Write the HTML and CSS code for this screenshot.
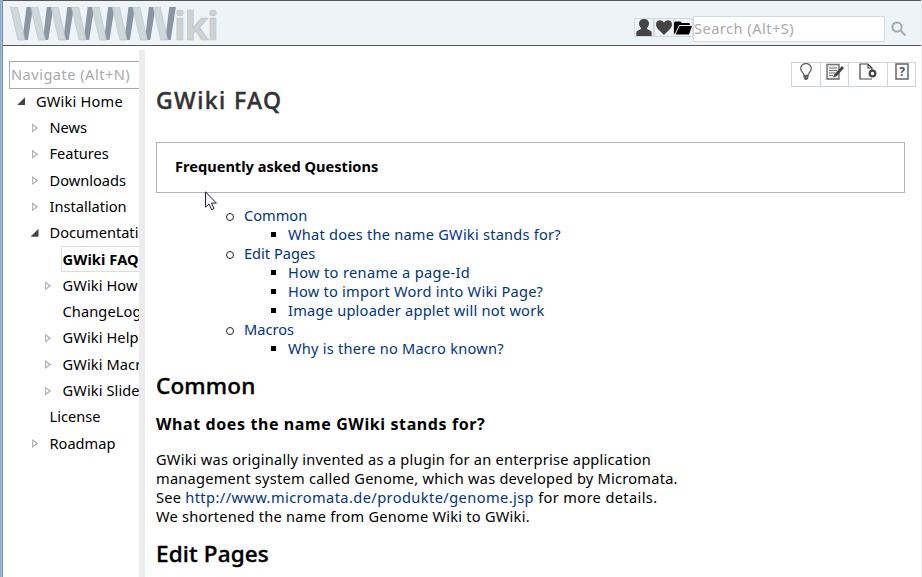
FILE: index.html
```html
<!DOCTYPE html>
<html lang="en">
<head>
<meta charset="utf-8">
<title>GWiki FAQ</title>
<link rel="stylesheet" href="styles.css">
</head>
<body>
<header class="header">
  <a class="logo" href="#">
    <svg class="logo-mark" width="168" height="34" viewBox="10 7 168 34">
      <defs>
        <path id="dark" d="M26.500 7h6.600l-5.200 33h-5.500z"/>
        <path id="light" d="M10.300 7h7.200l7.500 33h-7z"/>
      </defs>
      <g class="dark">
        <use href="#dark"/><use href="#dark" x="20.4"/><use href="#dark" x="40.8"/><use href="#dark" x="61.2"/><use href="#dark" x="81.6"/><use href="#dark" x="102"/><use href="#dark" x="122.4"/><use href="#dark" x="142.8"/>
      </g>
      <g class="light">
        <use href="#light"/><use href="#light" x="20.4"/><use href="#light" x="40.8"/><use href="#light" x="61.2"/><use href="#light" x="81.6"/><use href="#light" x="102"/><use href="#light" x="122.4"/><use href="#light" x="142.8"/>
      </g>
    </svg>
    <span class="logo-text">iki</span>
  </a>
  <div class="tools">
    <a class="tool" href="#"><svg width="18" height="17" viewBox="0 0 18 17"><path fill="#444" d="M9 0c3.200 0 5 2 5 4.500 0 1.800-.8 3.300-2 4.500v1l3.500 1.800q1.200.700 1.200 2V17H1.300v-3.200q0-1.300 1.200-2L6 10V9C4.800 7.800 4 6.300 4 4.500 4 2 5.800 0 9 0z"/></svg></a>
    <a class="tool" href="#"><svg width="18" height="17" viewBox="0 0 18 17"><path fill="#444" d="M9 3.500C6.500 0 1 .8 1 5.500 1 9.500 6 12.500 9 16c3-3.500 8-6.500 8-10.500C17 .8 11.500 0 9 3.500z"/></svg></a>
    <a class="tool" href="#"><svg width="18" height="17" viewBox="0 0 18 17"><path d="M0 15V4q0-1.500 1.500-1.500h5L8 4h7q1 0 1 1.500V6H5L1.200 14zM5.500 7H18l-3 8.500H1.500z"/></svg></a>
    <input class="search" type="text" placeholder="Search (Alt+S)">
    <svg class="lens" width="16" height="16" viewBox="0 0 16 16"><circle cx="6" cy="6" r="4.600"/><path d="M9.500 9.500l5 5"/></svg>
  </div>
</header>
<div class="body">
  <nav class="sidebar">
    <input class="navigate" type="text" placeholder="Navigate (Alt+N)">
    <ul class="tree">
      <li class="l1 open">GWiki Home</li>
      <li class="l2 closed">News</li>
      <li class="l2 closed">Features</li>
      <li class="l2 closed">Downloads</li>
      <li class="l2 closed">Installation</li>
      <li class="l2 open">Documentati</li>
      <li class="l3 current"><span>GWiki FAQ</span></li>
      <li class="l3 closed">GWiki How</li>
      <li class="l3">ChangeLog</li>
      <li class="l3 closed">GWiki Help</li>
      <li class="l3 closed">GWiki Macr</li>
      <li class="l3 closed">GWiki Slide</li>
      <li class="l2">License</li>
      <li class="l2 closed">Roadmap</li>
    </ul>
  </nav>
  <main class="content">
    <div class="actions">
      <a href="#"><svg width="14" height="19" viewBox="0 0 14 19"><path fill="none" stroke="#666" stroke-width="1.300" d="M5 12.500C5 10 1.700 8.500 1.700 5.500a5.300 5 0 0 1 10.600 0C12.300 8.500 9 10 9 12.500z"/><path fill="#666" d="M4.500 12.500h5v2.500L8 17H6L4.500 15z"/></svg></a>
      <a href="#"><svg width="18" height="19" viewBox="0 0 18 19"><path fill="#eee" stroke="#666" stroke-width="1.300" d="M1 1.500h12v14.500H1z"/><path stroke="#777" d="M1 1.500h12M3 5h8M3 7.500h8M3 10h6M3 12.500h4"/><path fill="#444" d="M16 3l2 2-7 8-4 1.500L8.500 11z"/></svg></a>
      <a href="#"><svg width="18" height="19" viewBox="0 0 18 19"><path fill="none" stroke="#444" stroke-width="1.200" d="M13 16H1V1h8l4 4v2M9 1v4h4"/><circle cx="13.500" cy="10.500" r="2.800" fill="#fff" stroke="#444" stroke-width="2.200"/></svg></a>
      <a href="#"><svg width="14" height="19" viewBox="0 0 14 19"><path fill="none" stroke="#666" stroke-width="1.500" d="M1 1h12v15H1z"/><text x="7" y="13" text-anchor="middle" class="q">?</text></svg></a>
    </div>
    <h1>GWiki FAQ</h1>
    <div class="box">Frequently asked Questions</div>
    <ul class="toc">
      <li><a href="#">Common</a>
        <ul><li><a href="#">What does the name GWiki stands for?</a></li></ul></li>
      <li><a href="#">Edit Pages</a>
        <ul><li><a href="#" class="wide">How to rename a page-Id</a></li>
        <li><a href="#">How to import Word into Wiki Page?</a></li>
        <li><a href="#">Image uploader applet will not work</a></li></ul></li>
      <li><a href="#">Macros</a>
        <ul><li><a href="#">Why is there no Macro known?</a></li></ul></li>
    </ul>
    <h2>Common</h2>
    <h3>What does the name GWiki stands for?</h3>
    <p>GWiki was originally invented as a plugin for an enterprise application<br>management system called Genome, which was developed by Micromata.<br>See <a href="#" class="url">http://www.micromata.de/produkte/genome.jsp</a><span class="wide"> for more details.</span><br>We shortened the name from Genome Wiki to GWiki.</p>
    <h2>Edit Pages</h2>
  </main>
</div>
<svg class="cursor" width="13" height="20" viewBox="0 0 13 20"><path fill="#f8f8fa" stroke="#223" d="M.5.800v15.400l3.500-3.300 2.600 5.800 2.400-1-2.500-5.600h4.900z"/></svg>
</body>
</html>
```

FILE: styles.css
```css
* { box-sizing: border-box; }
body {
  margin: 0;
  height: 577px;
  overflow: hidden;
  display: flex;
  flex-direction: column;
  border-right: 1px solid #eee;
  padding-left: 3px;
  background: linear-gradient(90deg, #86a9d0 0 1px, #a9c3e0 1px 2px, #7d8790 2px 3px, #fff 3px);
  color: #000;
  font: 14.6px/19px "Noto Sans", sans-serif;
}
a { color: #003580; text-decoration: none; }
ul { margin: 0; padding: 0; }
svg { display: block; }
input { font: inherit; color: #000; outline: 0; letter-spacing: .48px; }
input::placeholder { color: #a9a9a9; opacity: 1; }
.header {
  flex: none;
  height: 46px;
  display: flex;
  justify-content: space-between;
  background: #eef3f7;
  border-top: 1px solid #55575a;
  border-bottom: 1px solid #55575a;
}
.logo { display: flex; padding: 6px 0 0 7px; }
.dark { fill: #8b96a3; }
.light { fill: #ced7da; stroke: #b9c1c5; stroke-width: .6; }
.logo-text {
  margin: -2px 0 0 -4px;
  font: bold 38.5px/40px "Open Sans", sans-serif;
  letter-spacing: -1.3px;
  color: #cdd3d5;
  -webkit-text-stroke: .6px #b9bfc2;
}
.tools { display: flex; padding: 15px 14px 0 0; }
.tool { height: 19px; width: 20px; margin: 2px -.3px 0 0; border: 1px solid #d3dadc; }
.search { width: 192px; height: 26px; padding: 0 0 2px; border: 1px solid #d3dadc; background: #fff; }
.lens { margin: 5px 0 0 6px; fill: none; stroke: #aaa; stroke-width: 2; }
.body { flex: 1; min-height: 0; display: flex; }
.sidebar { width: 136px; padding: 15px 0 0 6px; overflow: hidden; flex: none; }
.navigate { display: block; width: 180px; height: 28px; padding: 0 1px 2px; border: 1px solid #aaa; }
.tree { list-style: none; white-space: nowrap; margin-top: -1px; }
.tree li { display: flex; align-items: center; height: 26.3px; }
.tree li::before { content: ""; flex: none; width: 9px; height: 10px; margin-right: 10px; }
.l1 { padding-left: 8px; letter-spacing: .2px; }
.l2 { padding-left: 21.500px; }
.l3 { padding-left: 34.500px; letter-spacing: .1px; }
.tree .open::before { width: 8px; height: 8px; background: #444; clip-path: polygon(100% 0, 100% 100%, 0 100%); margin-right: 11px; }
.tree .closed::before { width: 8px; margin: 1px 10px 0 1px; background: #b4b4b4; clip-path: polygon(0 0, 85% 50%, 0 100%, 0 0, 20% 28%, 20% 72%, 56% 50%, 20% 28%); }
.current span { margin-left: -2px; padding-left: 1px; width: 120px; height: 26px; line-height: 24px; border: 1px solid #ddd; font-weight: bold; }
.content { flex: 1; margin-top: 4px; padding: 0 16px 0 11px; border-left: 6px solid #ececec; }
.actions { display: flex; justify-content: flex-end; margin: 12px -11px 0 0; }
.actions a { width: 29px; height: 25px; margin-left: -1px; border: 1px solid #ccd5d8; display: flex; justify-content: center; }
.actions a:first-child { width: 30px; }
.actions a:nth-child(2) { width: 29px; }
.actions a:nth-child(3) { width: 40px; }
.q { font: bold 12px "Noto Sans", sans-serif; fill: #555; }
h1, h2, h3, p { margin: 0; }
h1 { margin-top: -2px; font-size: 23px; line-height: 30px; font-weight: 500; color: #333; letter-spacing: 1.4px; -webkit-text-stroke: .4px #333; }
.box { margin-top: 27px; height: 51px; padding: 0 18px; line-height: 47px; border: 1px solid #b4b4b4; font-weight: bold; }
.toc { margin: 13px 0 0 88px; list-style: none; }
.toc ul { list-style: none; margin-left: 44px; letter-spacing: .23px; }
.toc ul .wide { letter-spacing: .34px; }
.toc li { position: relative; }
.toc li::before { content: ""; position: absolute; left: -18px; top: 7px; width: 6px; height: 6px; border: 1px solid #222; border-radius: 50%; }
.toc ul li::before { left: -17px; top: 7px; width: 5px; height: 5px; background: #000; border: 0; border-radius: 0; }
h2 { font-size: 22.500px; line-height: 30px; font-weight: 500; margin-top: 13px; -webkit-text-stroke: .4px #000; letter-spacing: .15px; }
h3 { font-size: 16px; line-height: 22px; margin-top: 12px; letter-spacing: .6px; }
p { margin-top: 15px; white-space: nowrap; letter-spacing: .24px; }
.url { letter-spacing: .42px; }
p .wide { letter-spacing: .37px; }
.cursor { position: absolute; left: 205px; top: 191px; }
```
